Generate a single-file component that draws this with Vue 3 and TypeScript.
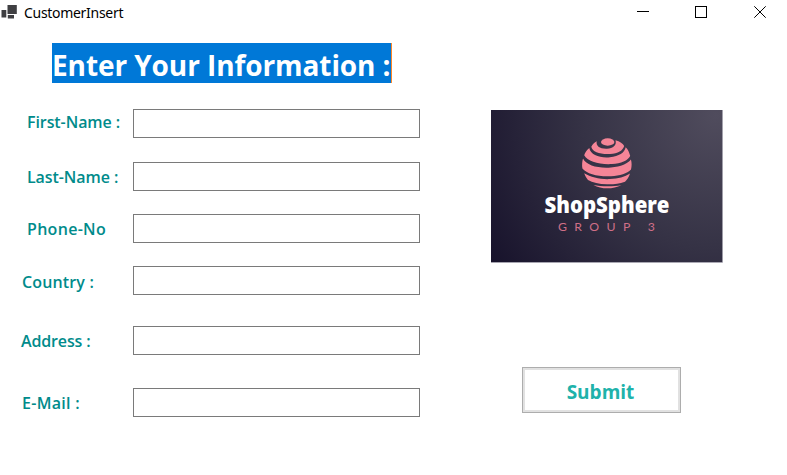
<script setup lang="ts">
import { reactive } from 'vue'

interface Field {
  key: string
  label: string
}

const fields: Field[] = [
  { key: 'first', label: 'First-Name :' },
  { key: 'last', label: 'Last-Name :' },
  { key: 'phone', label: 'Phone-No' },
  { key: 'country', label: 'Country :' },
  { key: 'address', label: 'Address :' },
  { key: 'email', label: 'E-Mail :' },
]

const values = reactive<Record<string, string>>({
  first: '', last: '', phone: '', country: '', address: '', email: '',
})
</script>

<template>
  <div class="window">
    <header class="titlebar">
      <svg class="app-icon" width="17" height="16" viewBox="0 0 17 16">
        <rect x="6.500" y="0" width="9.300" height="9" fill="#3f3f42" />
        <rect x="0.500" y="5" width="4.800" height="7.500" fill="#3f3f42" />
        <rect x="6.800" y="10" width="6.200" height="3.500" fill="#3f3f42" />
      </svg>
      <span class="title">CustomerInsert</span>
      <svg class="controls" width="132" height="14" viewBox="0 0 132 14" fill="none" stroke="#000" stroke-width="1">
        <path d="M0 6.5H12" />
        <rect x="58.5" y="1.5" width="11" height="11" />
        <path d="M117.3 1.3L128.7 12.7M128.7 1.3L117.3 12.7" />
      </svg>
    </header>

    <main class="content">
      <form class="form" @submit.prevent>
        <h1 class="heading"><span>Enter Your Information :</span></h1>
        <div v-for="f in fields" :key="f.key" class="row" :class="f.key">
          <label :for="f.key"><span>{{ f.label }}</span></label>
          <input :id="f.key" v-model="values[f.key]" type="text" />
        </div>
      </form>

      <aside class="side">
        <svg class="logo" width="232" height="153" viewBox="0 0 232 153">
          <defs>
            <radialGradient id="bg" gradientUnits="userSpaceOnUse" cx="225" cy="5" r="270">
              <stop offset="0" stop-color="#504c5d" />
              <stop offset="0.5" stop-color="#353245" />
              <stop offset="1" stop-color="#17122b" />
            </radialGradient>
          </defs>
          <rect width="232" height="153" fill="#c9c8d0" />
          <rect width="231.3" height="152.2" fill="url(#bg)" />
          <g fill="#f58597">
            <ellipse cx="116.700" cy="32" rx="6.700" ry="3.700" />
            <path d="M105.800 31.300C104.500 36 109 39 116 38.700C122 38.400 126 35.500 124.500 30.300C129 31.500 132 33.700 133.200 36C132 40.500 127 43.500 119 44C109 44.500 101.500 42 100.300 36.800C101.500 34.500 103.500 32.500 105.800 31.300Z" />
            <path d="M98.300 38C99.500 45 109 48.200 119 47.200C128 46.200 133.500 43 134.700 37.300C137 39.500 138.500 43 139.200 46C137 50.500 130 53.500 121 54.100C108 54.800 96.500 51.500 93.200 45.300C94 42.500 96 39.800 98.300 38Z" />
            <path d="M92 48.500C95.500 55.500 107 58.500 120 57.500C130 56.600 137 53.500 139.900 49.500C140.900 53 140.800 56 140 59.500C136 63.500 129 65.700 120 66.200C107 66.800 96 64 91.400 58.500C90.800 55 91.200 51.500 92 48.500Z" />
            <path d="M93.200 63.300C100 67.500 109 69.500 119 69.100C127 68.800 134 67 139 63.500C137.800 67.500 135.800 70 134 71.800C128 74 123 74.400 116 74.300C108 74 101.500 72.700 97 70C95.500 68.200 94.200 66 93.200 63.300Z" />
            <path d="M102.500 74.900C110 76.700 122 77 130.500 74.900C122 79.500 110.500 79.500 102.500 74.900Z" />
          </g>
          <text class="brand" x="53.500" y="103" textLength="125" lengthAdjust="spacingAndGlyphs">ShopSphere</text>
          <text class="group" x="67" y="121" textLength="97" lengthAdjust="spacing">GROUP 3</text>
        </svg>
        <button class="submit" type="button"><span>Submit</span></button>
      </aside>
    </main>
  </div>
</template>

<style>
body {
  background: #fff;
}
</style>

<style scoped>
.window {
  width: 787px;
  height: 475px;
  overflow: hidden;
  background: #fff;
  font-family: 'Open Sans', 'Noto Sans', sans-serif;
}
.titlebar {
  display: flex;
  align-items: flex-start;
  height: 24px;
  box-sizing: border-box;
  padding: 5px 18px 0 1px;
  color: #000;
}
.app-icon {
  flex: none;
}
.title {
  margin-left: 6px;
  font-family: 'Noto Sans', sans-serif;
  font-size: 14px;
  line-height: 16px;
  letter-spacing: -0.3px;
}
.controls {
  margin-left: auto;
}
.content {
  display: flex;
}
.form {
  width: 420px;
  margin: 0;
  padding-top: 19px;
}
.heading {
  display: flex;
  width: 340px;
  height: 40px;
  margin: 0 0 26px 52px;
  box-sizing: border-box;
  border-right: 1px solid #ff8728;
  background: #0078d7;
  color: #fff;
  font-size: 28px;
  font-weight: 700;
  line-height: 44px;
  letter-spacing: -0.09px;
  white-space: nowrap;
}
.row {
  display: grid;
  grid-template-columns: 133px 287px;
  height: 29px;
}
.row label {
  padding-left: 27px;
  color: #008b8b;
  font-size: 16px;
  font-weight: 600;
  line-height: 26px;
  letter-spacing: -0.08px;
  white-space: nowrap;
}
.row input {
  box-sizing: border-box;
  width: 287px;
  height: 29px;
  margin: 0;
  padding: 2px 6px;
  border: 1px solid #7a7a7a;
  border-radius: 0;
  outline: 0;
  background: #fff;
  font: inherit;
}
.row.last { margin-top: 24px; }
.row.phone { margin-top: 23px; }
.row.country { margin-top: 23px; }
.row.address { margin-top: 31px; }
.row.email { margin-top: 33px; }
.row.last label { line-height: 30px; }
.row.phone label { line-height: 30px; letter-spacing: 0.3px; }
.row.country label { padding-left: 22px; line-height: 32px; letter-spacing: 0.15px; }
.row.address label { padding-left: 21px; line-height: 30px; letter-spacing: -0.15px; }
.row.email label { padding-left: 22px; line-height: 30px; letter-spacing: 0.3px; }
.side {
  display: flex;
  flex-direction: column;
  align-items: flex-start;
  padding: 86px 0 0 71px;
}
.brand {
  fill: #fff;
  font-family: 'Open Sans', sans-serif;
  font-size: 22.5px;
  font-weight: 800;
}
.group {
  fill: #cf6f87;
  font-family: Lato, sans-serif;
  font-size: 12.3px;
}
.submit {
  width: 159px;
  height: 46px;
  margin: 104px 0 0 31px;
  padding: 3px 2px 0 0;
  border: 1px solid #adadad;
  border-radius: 0;
  box-shadow: inset 0 0 0 2px #e1e1e1;
  background: #fff;
  color: #20b2aa;
  font-family: 'Open Sans', sans-serif;
  font-size: 19px;
  font-weight: 700;
}
</style>
